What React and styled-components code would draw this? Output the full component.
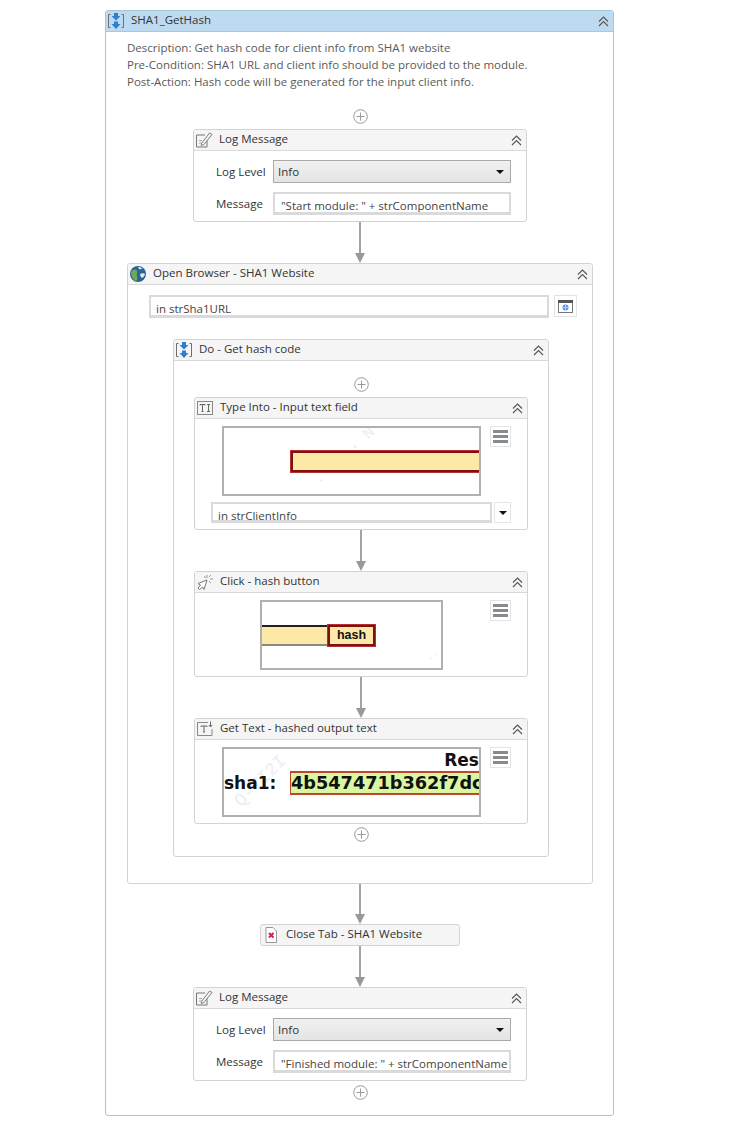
import React from 'react';
import styled, { createGlobalStyle } from 'styled-components';

const GlobalStyle = createGlobalStyle`
  * { box-sizing: border-box; }
  html, body { margin: 0; background: #fff; }
  body {
    font-family: "Open Sans", "Noto Sans", sans-serif;
    font-size: 11.5px;
    color: #333;
  }
`;

const Page = styled.div`
  width: 750px;
  height: 1141px;
  padding: 10px 0 0 105px;
`;

const Card = styled.section`
  width: ${props => props.$width}px;
  flex: none;
  background: #fff;
  border: 1px solid ${props => props.$border || '#d3d3d3'};
  border-radius: 3px;
`;

const ModuleCard = styled(Card)`
  height: 1106px;
`;

const CardHeader = styled.header`
  display: flex;
  align-items: center;
  height: ${props => props.$height || 21}px;
  padding: 0 3px 0 1px;
  background: ${props => props.$blue ? '#bedaf0' : '#f5f5f5'};
  border-bottom: 1px solid ${props => props.$blue ? '#a6cae2' : '#d9d9d9'};
  border-radius: 2px 2px 0 0;
`;

const IconSlot = styled.span`
  display: flex;
  align-items: center;
  width: 24px;
  height: 18px;
  flex: none;
`;

const Title = styled.span`
  flex: 1;
  padding-bottom: 3px;
  white-space: nowrap;
  font-size: 11.5px;
  color: #333;
`;

const Flow = styled.div`
  display: flex;
  flex-direction: column;
  align-items: center;
  padding: ${props => props.$padding || '0'};
`;

const Description = styled.div`
  align-self: stretch;
  margin-bottom: 19px;
  padding-left: 20px;
  line-height: 17px;
  color: #5a5a5a;
`;

const AddButton = styled.svg`
  display: block;
  flex: none;
  width: 15px;
  height: 15px;
  margin-bottom: ${props => props.$bottom || 0}px;
  margin-top: ${props => props.$top || 0}px;
`;

const Connector = styled.div`
  display: flex;
  flex-direction: column;
  align-items: center;
  flex: none;
  height: ${props => props.$height || 41}px;
`;

const ConnectorLine = styled.div`
  flex: 1;
  width: 2px;
  background: #a3a3a3;
`;

const ConnectorHead = styled.div`
  width: 0;
  height: 0;
  border-left: 5px solid transparent;
  border-right: 5px solid transparent;
  border-top: 10px solid #999;
`;

const LogBody = styled.div`
  display: flex;
  flex-direction: column;
  gap: 9px;
  padding: 9px 15px ${props => props.$bottom || 6}px 22px;
`;

const LogRow = styled.div`
  display: flex;
  align-items: center;
  height: 23px;
`;

const LogLabel = styled.span`
  width: 57px;
  flex: none;
  color: #333;
`;

const Combo = styled.div`
  flex: 1;
  display: flex;
  align-items: center;
  justify-content: space-between;
  height: 23px;
  padding: 0 6px 0 4px;
  background: linear-gradient(#f1f1f1, #e4e4e4);
  border: 1px solid #a9a9a9;
`;

const Caret = styled.span`
  width: 0;
  height: 0;
  border-left: 4px solid transparent;
  border-right: 4px solid transparent;
  border-top: 4px solid #111;
`;

const Field = styled.div`
  flex: ${props => props.$fixed ? 'none' : 1};
  width: ${props => props.$fixed ? `${props.$fixed}px` : 'auto'};
  height: ${props => props.$height || 23}px;
  padding: 3px 0 0 ${props => props.$left || 6}px;
  line-height: 17px;
  white-space: nowrap;
  overflow: hidden;
  background: #fff;
  border: 2px solid #dadada;
  border-bottom-width: 3px;
  color: #444;
`;

const BrowserRow = styled.div`
  display: flex;
  gap: 5px;
  align-items: flex-start;
  padding: 10px 15px 0 21px;
`;

const IconButton = styled.div`
  display: flex;
  align-items: center;
  justify-content: center;
  flex: none;
  width: ${props => props.$width || 21}px;
  height: ${props => props.$height || 21}px;
  background: #fff;
  border: 1px solid #dfe5ea;
`;

const DoCard = styled(Card)`
  margin: 21px 0 26px 45px;
`;

const ActivityBody = styled.div`
  padding: 7px 16px 6px 16px;
`;

const TargetRow = styled.div`
  display: flex;
  align-items: flex-start;
  padding-left: 2px;
`;

const TargetArea = styled.div`
  flex: 1;
  display: flex;
  justify-content: center;
`;

const Target = styled.div`
  position: relative;
  display: flex;
  flex-direction: ${props => props.$column ? 'column' : 'row'};
  align-items: ${props => props.$column ? 'stretch' : 'center'};
  width: ${props => props.$width}px;
  height: 70px;
  padding-left: ${props => props.$left || 0}px;
  overflow: hidden;
  background: #fff;
  border: 2px solid #b0b0b0;
  font-family: "DejaVu Sans", sans-serif;
  font-weight: bold;
  color: #111;
`;

const Watermark = styled.span`
  position: absolute;
  left: ${props => props.$left}px;
  top: ${props => props.$top}px;
  transform: rotate(-45deg);
  font-family: "Liberation Mono", monospace;
  font-size: ${props => props.$size || 14}px;
  font-weight: normal;
  white-space: nowrap;
  color: #e9eef7;
`;

const InputHighlight = styled.div`
  position: relative;
  flex: none;
  width: 220px;
  height: 23px;
  background: #fde8a8;
  border: 1px solid #b5302c;
  box-shadow: inset 0 0 0 2px #7a1212;
`;

const BarStub = styled.div`
  width: 65px;
  height: 21px;
  flex: none;
  background: #fde8a8;
  border-top: 2px solid #222;
  border-bottom: 2px solid #8a8a7a;
`;

const HashButton = styled.div`
  position: relative;
  flex: none;
  width: 49px;
  height: 23px;
  font-family: "Liberation Sans", sans-serif;
  font-size: 12.5px;
  line-height: 21px;
  text-align: center;
  color: #111;
  background: #fde8a8;
  border: 1px solid #b5302c;
  box-shadow: inset 0 0 0 2px #7a1212;
`;

const ResultHead = styled.div`
  height: 22px;
  line-height: 22px;
  font-size: 17px;
  text-align: right;
  position: relative;
`;

const ResultRow = styled.div`
  position: relative;
  display: flex;
  align-items: center;
  height: 24px;
  font-size: 17px;
`;

const ResultLabel = styled.span`
  flex: none;
  width: 66px;
  white-space: nowrap;
`;

const ResultValue = styled.div`
  flex: none;
  width: 220px;
  height: 24px;
  line-height: 20px;
  font-size: 17.7px;
  white-space: nowrap;
  background: #d9f7a0;
  border: 2px solid #c2452d;
  border-left-width: 1px;
`;

const InputRow = styled.div`
  display: flex;
  gap: 2px;
  margin-top: 6px;
`;

const DropButton = styled.div`
  display: flex;
  align-items: center;
  justify-content: center;
  flex: none;
  width: 17px;
  height: 21px;
  border: 1px solid #e6e6e6;
`;

const CloseCard = styled(Card)`
  height: 22px;
  background: #f5f5f5;
  padding-left: 1px;
  display: flex;
  align-items: center;
`;

const Collapse = () => (
  <svg width="13" height="13" viewBox="0 0 13 13" fill="none" stroke="#555" strokeWidth="1.1">
    <path d="M2 6.5 6.5 2 11 6.5" />
    <path d="M2 11 6.5 6.5 11 11" />
  </svg>
);

const Plus = ({ top, bottom }) => (
  <AddButton $top={top} $bottom={bottom} viewBox="0 0 15 15" fill="none" stroke="#9a9a9a">
    <circle cx="7.5" cy="7.5" r="6.8" />
    <path d="M7.5 3.5v8M3.5 7.5h8" />
  </AddButton>
);

const Arrow = ({ height }) => (
  <Connector $height={height}>
    <ConnectorLine />
    <ConnectorHead />
  </Connector>
);

const MenuIcon = () => (
  <svg width="15" height="13" viewBox="0 0 15 13" fill="#8a8a8a">
    <rect x="0" y="0" width="15" height="3" />
    <rect x="0" y="5" width="15" height="3" />
    <rect x="0" y="10" width="15" height="3" />
  </svg>
);

const SequenceIcon = () => (
  <svg width="18" height="18" viewBox="0 0 18 18" fill="none">
    <path d="M3.5 2.5H1.5v13h2M14.5 2.5h2v13h-2" stroke="#6f6f6f" />
    <path d="M7 1h4v3h2.500L9 8.500 4.500 4H7zM7 9.500h4V12h2.500L9 17l-4.500-5H7z" fill="#2f7fd0" />
  </svg>
);

const LogIcon = () => (
  <svg width="18" height="18" viewBox="0 0 18 18" fill="none">
    <path d="M12 7.500v8.500H1.500V4H10" stroke="#777" />
    <path d="M4 9.500h3M4 12h3" stroke="#aaa" />
    <path d="M6.500 12.500 14.500 2 17 3.500l-8 10-2.800 1z" fill="#f2f2f2" stroke="#808080" />
  </svg>
);

const GlobeIcon = () => (
  <svg width="18" height="18" viewBox="0 0 18 18">
    <circle cx="9" cy="9" r="8" fill="#2a6496" />
    <path d="M2 7c2-3 5-3 6-1s-1 3 0 5 0 5-1 5c-3-1-5-5-5-9z" fill="#6cab55" />
    <path d="M9 2c2 0 3 .5 4 1.500-1 1-2 1-3 .5zM11 9c2-1 4-1 5 0-.5 2-1.500 3-3 4-1-1-2-2-2-4z" fill="#dfeaf2" />
  </svg>
);

const TypeIcon = () => (
  <svg width="18" height="18" viewBox="0 0 18 18" fill="none">
    <rect x="1.500" y="2.500" width="15" height="13" stroke="#888" />
    <path d="M4 6.500V5.500h5v1M6.500 5.500v7M5.500 12.500h2M11 5.500h3M11 12.500h3M12.500 5.500v7" stroke="#666" />
  </svg>
);

const ClickIcon = () => (
  <svg width="18" height="18" viewBox="0 0 18 18" fill="none">
    <path d="M11 7 2 10.500l2.500 1.500L2 15l1.500 1.500 3-2.500 1.500 2.500z" fill="#fff" stroke="#777" />
    <path d="M11 2v3M14 6h3M13 4l2-2M13 8l2 2M8.500 3 9.500 5" stroke="#999" />
  </svg>
);

const GetTextIcon = () => (
  <svg width="18" height="18" viewBox="0 0 18 18" fill="none">
    <path d="M16 9v6.500H1.500v-13H12" stroke="#888" />
    <path d="M5 7V6h6v1M8 6v6M7 12h2" stroke="#666" />
    <path d="M14.500 1.500v5M12.800 5l1.700 2 1.700-2" stroke="#666" />
  </svg>
);

const CloseTabIcon = () => (
  <svg width="18" height="18" viewBox="0 0 18 18" fill="none">
    <path d="M4 1.500h7l3.500 3.500v11.500H4z" fill="#fff" stroke="#999" />
    <path d="M7 7l4.500 4.500M11.500 7 7 11.500" stroke="#d8204a" strokeWidth="2" />
  </svg>
);

const BrowserIcon = () => (
  <svg width="15" height="13" viewBox="0 0 15 13">
    <rect x="0.500" y="0.500" width="14" height="12" fill="#fff" stroke="#777" />
    <rect x="0" y="0" width="15" height="3" fill="#555" />
    <circle cx="7.500" cy="7.500" r="3" fill="#5b93dc" />
    <path d="M4.500 7.500h6M7.500 4.500v6" stroke="#cfe0f6" strokeWidth=".7" />
  </svg>
);

const Head = ({ icon, title, blue, height }) => (
  <CardHeader $blue={blue} $height={height}>
    <IconSlot>{icon}</IconSlot>
    <Title>{title}</Title>
    <Collapse />
  </CardHeader>
);

const LogMessage = ({ message, bottom }) => (
  <Card $width={334}>
    <Head icon={<LogIcon />} title="Log Message" />
    <LogBody $bottom={bottom}>
      <LogRow>
        <LogLabel>Log Level</LogLabel>
        <Combo>Info<Caret /></Combo>
      </LogRow>
      <LogRow>
        <LogLabel>Message</LogLabel>
        <Field>{message}</Field>
      </LogRow>
    </LogBody>
  </Card>
);

const Activity = ({ icon, title, target, children }) => (
  <Card $width={334}>
    <Head icon={icon} title={title} />
    <ActivityBody>
      <TargetRow>
        <TargetArea>{target}</TargetArea>
        <IconButton><MenuIcon /></IconButton>
      </TargetRow>
      {children}
    </ActivityBody>
  </Card>
);

const App = () => {
  return (
    <Page>
      <GlobalStyle />
      <ModuleCard $width={509} $border="#a5c6da">
        <Head blue icon={<SequenceIcon />} title="SHA1_GetHash" />
        <Flow $padding="7px 0 0 1px">
          <Description>
            Description: Get hash code for client info from SHA1 website<br />
            Pre-Condition: SHA1 URL and client info should be provided to the module.<br />
            Post-Action: Hash code will be generated for the input client info.
          </Description>
          <Plus bottom={5} />
          <LogMessage message={'"Start module: " + strComponentName'} />
          <Arrow />
          <Card $width={466}>
            <Head icon={<GlobeIcon />} title="Open Browser - SHA1 Website" />
            <BrowserRow>
              <Field $left={5}>in strSha1URL</Field>
              <IconButton $width={23} $height={22}><BrowserIcon /></IconButton>
            </BrowserRow>
            <DoCard $width={376}>
              <Head icon={<SequenceIcon />} title="Do - Get hash code" />
              <Flow $padding="16px 0 14px">
                <Plus bottom={5} />
                <Activity
                  icon={<TypeIcon />}
                  title="Type Into - Input text field"
                  target={
                    <Target $width={259} $left={66}>
                      <Watermark $left={83} $top={20} $size={16}>· 00 · N</Watermark>
                      <InputHighlight />
                    </Target>
                  }
                >
                  <InputRow>
                    <Field $fixed={281} $height={21} $left={5}>in strClientInfo</Field>
                    <DropButton><Caret /></DropButton>
                  </InputRow>
                </Activity>
                <Arrow />
                <Activity
                  icon={<ClickIcon />}
                  title="Click - hash button"
                  target={
                    <Target $width={183}>
                      <Watermark $left={165} $top={49} $size={10}>--</Watermark>
                      <BarStub />
                      <HashButton>hash</HashButton>
                    </Target>
                  }
                />
                <Arrow />
                <Activity
                  icon={<GetTextIcon />}
                  title="Get Text - hashed output text"
                  target={
                    <Target $width={259} $column>
                      <Watermark $left={4} $top={22} $size={18}>Q-7I2I</Watermark>
                      <ResultHead>Res</ResultHead>
                      <ResultRow>
                        <ResultLabel>sha1:</ResultLabel>
                        <ResultValue>4b547471b362f7dc</ResultValue>
                      </ResultRow>
                    </Target>
                  }
                />
                <Plus top={3} />
              </Flow>
            </DoCard>
          </Card>
          <Arrow height={40} />
          <CloseCard $width={200}>
            <IconSlot><CloseTabIcon /></IconSlot>
            <Title>Close Tab - SHA1 Website</Title>
          </CloseCard>
          <Arrow />
          <LogMessage message={'"Finished module: " + strComponentName'} bottom={7} />
          <Plus top={4} />
        </Flow>
      </ModuleCard>
    </Page>
  );
};

export default App;
